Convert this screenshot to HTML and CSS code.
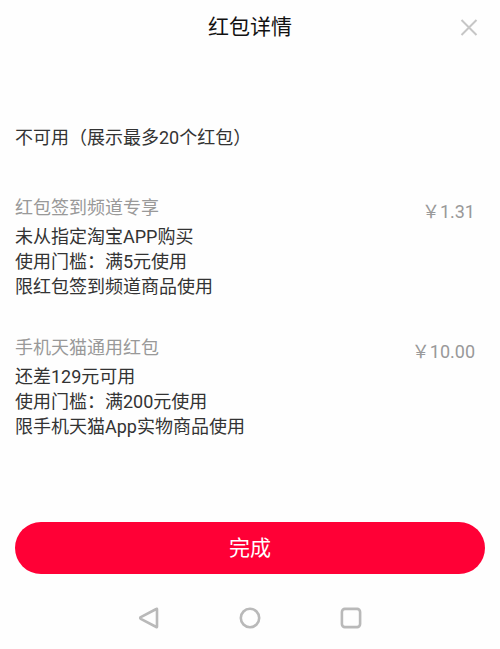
FILE: index.html
```html
<!DOCTYPE html>
<html lang="zh-CN">
<head>
<meta charset="utf-8">
<meta name="viewport" content="width=device-width, initial-scale=1">
<title>红包详情</title>
<link rel="stylesheet" href="styles.css">
</head>
<body>
<header class="header">
  <h1 class="title">红包详情</h1>
  <button class="close" type="button" aria-label="关闭">
    <svg width="18" height="18" viewBox="0 0 18 18" fill="none" stroke="#c6c6c6" stroke-width="2"><path d="M1.5 2 16.5 17M16.5 2 1.5 17"/></svg>
  </button>
</header>
<main class="content">
  <h2 class="section-title">不可用（展示最多20个红包）</h2>
  <ul class="coupons">
    <li class="coupon">
      <div class="info">
        <h3 class="name">红包签到频道专享</h3>
        <p>未从指定淘宝APP购买</p>
        <p>使用门槛：满5元使用</p>
        <p>限红包签到频道商品使用</p>
      </div>
      <span class="amount">￥1.31</span>
    </li>
    <li class="coupon">
      <div class="info">
        <h3 class="name">手机天猫通用红包</h3>
        <p>还差129元可用</p>
        <p>使用门槛：满200元使用</p>
        <p>限手机天猫App实物商品使用</p>
      </div>
      <span class="amount">￥10.00</span>
    </li>
  </ul>
  <button class="done" type="button">完成</button>
</main>
<nav class="system-nav">
  <button type="button" aria-label="返回">
    <svg width="24" height="24" viewBox="0 0 24 24" fill="none" stroke="#b9b9b9" stroke-width="2.6" stroke-linejoin="round"><path d="M20 3.2V20.8Q20 21.4 19.3 21L3.8 12.8Q2.6 12 3.8 11.2L19.3 3Q20 2.6 20 3.2Z"/></svg>
  </button>
  <button type="button" aria-label="主页">
    <svg width="24" height="24" viewBox="0 0 24 24" fill="none" stroke="#b9b9b9" stroke-width="2.6"><circle cx="12" cy="12" r="9.2"/></svg>
  </button>
  <button type="button" aria-label="最近任务">
    <svg width="24" height="24" viewBox="0 0 24 24" fill="none" stroke="#b9b9b9" stroke-width="2.6"><rect x="2.9" y="2.9" width="18.2" height="18.2" rx="3"/></svg>
  </button>
</nav>
</body>
</html>
```
FILE: styles.css
```css
* {
  box-sizing: border-box;
}

body {
  margin: 0;
  background: #fefefe;
  color: #333;
  font-family: Roboto, "Noto Sans CJK SC", sans-serif;
  font-size: 18px;
  line-height: 25px;
}

h1, h2, h3, p, ul {
  margin: 0;
  padding: 0;
  font-size: inherit;
  font-weight: 400;
}

button {
  padding: 0;
  border: 0;
  background: none;
  font: inherit;
}

svg {
  display: block;
}

.header {
  display: grid;
  grid-template-columns: 1fr auto 1fr;
  align-items: center;
  height: 54px;
  padding: 0 22px;
}

.title {
  grid-column: 2;
  color: #111;
  font-size: 21px;
}

.close {
  justify-self: end;
}

.content {
  padding: 71px 15px 0;
}

.coupons {
  display: grid;
  gap: 36px;
  margin-top: 45px;
  list-style: none;
}

.coupon {
  display: flex;
  justify-content: space-between;
  padding-right: 10px;
}

.name {
  margin-bottom: 4px;
  color: #999;
}

.amount {
  padding-top: 4px;
  color: #999;
}

.done {
  width: 100%;
  height: 52px;
  margin-top: 83px;
  border-radius: 26px;
  background: #ff0036;
  color: #fff;
  font-size: 21px;
}

.system-nav {
  display: flex;
  justify-content: center;
  gap: 77px;
  padding: 32px 0 18px;
}
```
